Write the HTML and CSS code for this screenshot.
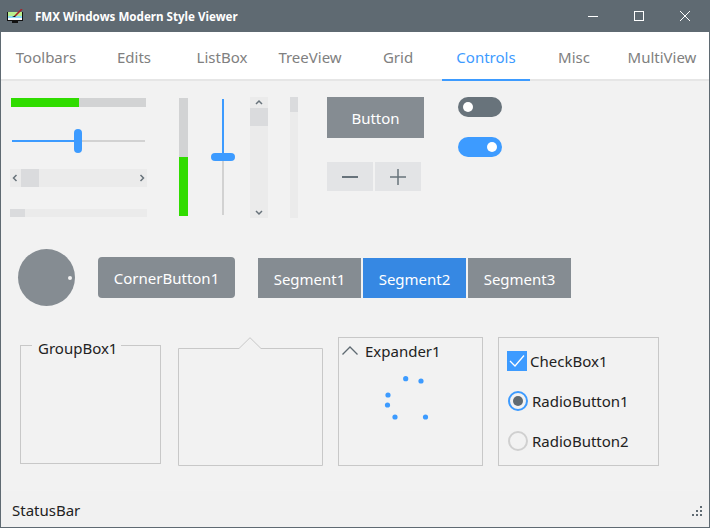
FILE: index.html
```html
<!DOCTYPE html>
<html lang="en">
<head>
    <meta charset="UTF-8">
    <title>FMX Windows Modern Style Viewer</title>
    <link rel="stylesheet" href="styles.css">
</head>
<body>
    <div class="window">
        <div class="titlebar">
            <svg class="app-icon" width="16" height="15" viewBox="0 0 16 15">
                <rect x="0" y="3" width="16" height="9" fill="#111"/>
                <rect x="1" y="3" width="14" height="4" fill="#b9ef8e"/>
                <rect x="1" y="7" width="14" height="4" fill="#8fdcf5"/>
                <rect x="1" y="9" width="14" height="2" fill="#fff"/>
                <rect x="5" y="12" width="6" height="2" fill="#111"/>
                <path d="M8 7 L15 0" stroke="#a5232a" stroke-width="1.6"/>
                <path d="M5 8 L8 6.5 L8.5 8 Z" fill="#111"/>
            </svg>
            <span class="title">FMX Windows Modern Style Viewer</span>
            <div class="win-buttons">
                <svg width="10" height="10" viewBox="0 0 10 10"><path d="M0 5.5H10" stroke="#fff"/></svg>
                <svg width="10" height="10" viewBox="0 0 10 10"><rect x="0.5" y="0.5" width="9" height="9" fill="none" stroke="#fff"/></svg>
                <svg width="10" height="10" viewBox="0 0 10 10"><path d="M0 0L10 10M10 0L0 10" stroke="#fff"/></svg>
            </div>
        </div>

        <div class="tabs">
            <div class="tab">Toolbars</div>
            <div class="tab">Edits</div>
            <div class="tab">ListBox</div>
            <div class="tab">TreeView</div>
            <div class="tab">Grid</div>
            <div class="tab active">Controls</div>
            <div class="tab">Misc</div>
            <div class="tab">MultiView</div>
        </div>

        <div class="content">
            <div class="row row-one">
                <div class="col-horizontal">
                    <div class="progress-h"><div class="progress-h-fill"></div></div>
                    <div class="slider-h">
                        <div class="slider-h-on"></div>
                        <div class="slider-h-thumb"></div>
                        <div class="slider-h-off"></div>
                    </div>
                    <div class="scroll-h">
                        <svg class="arrow" width="11" height="18" viewBox="0 0 11 18"><path d="M6.500 6L3.500 9L6.500 12" fill="none" stroke="#68737b" stroke-width="1.500"/></svg>
                        <div class="scroll-h-thumb"></div>
                        <svg class="arrow arrow-end" width="11" height="18" viewBox="0 0 11 18"><path d="M4.500 6L7.500 9L4.500 12" fill="none" stroke="#68737b" stroke-width="1.500"/></svg>
                    </div>
                    <div class="small-scroll-h"><div class="small-scroll-h-thumb"></div></div>
                </div>

                <div class="progress-v"><div class="progress-v-fill"></div></div>

                <div class="slider-v">
                    <div class="slider-v-on"></div>
                    <div class="slider-v-thumb"></div>
                    <div class="slider-v-off"></div>
                </div>

                <div class="scroll-v">
                    <svg class="arrow" width="18" height="11" viewBox="0 0 18 11"><path d="M6 7L9 4L12 7" fill="none" stroke="#68737b" stroke-width="1.500"/></svg>
                    <div class="scroll-v-thumb"></div>
                    <svg class="arrow arrow-end" width="18" height="11" viewBox="0 0 18 11"><path d="M6 4L9 7L12 4" fill="none" stroke="#68737b" stroke-width="1.500"/></svg>
                </div>

                <div class="small-scroll-v"><div class="small-scroll-v-thumb"></div></div>

                <div class="col-buttons">
                    <div class="button">Button</div>
                    <div class="spin">
                        <div class="spin-part"><svg width="16" height="16" viewBox="0 0 16 16"><path d="M0 8H16" stroke="#68737b" stroke-width="2"/></svg></div>
                        <div class="spin-part"><svg width="16" height="16" viewBox="0 0 16 16"><path d="M0 8H16M8 0V16" stroke="#68737b" stroke-width="1.500"/></svg></div>
                    </div>
                </div>

                <div class="col-switches">
                    <div class="switch"><div class="switch-knob"></div></div>
                    <div class="switch on"><div class="switch-knob"></div></div>
                </div>
            </div>

            <div class="row row-two">
                <div class="dial"><div class="dial-dot"></div></div>
                <div class="corner-button">CornerButton1</div>
                <div class="segments">
                    <div class="segment">Segment1</div>
                    <div class="segment active">Segment2</div>
                    <div class="segment">Segment3</div>
                </div>
            </div>

            <div class="row row-three">
                <div class="groupbox"><span class="legend">GroupBox1</span></div>

                <svg class="callout" width="145" height="129" viewBox="0 0 145 129">
                    <path d="M0.500 11.500H61L72 0.700L83 11.500H144.500V128.500H0.500Z" fill="none" stroke="#c8c8c8"/>
                </svg>

                <div class="expander">
                    <div class="expander-head">
                        <svg width="16" height="9" viewBox="0 0 16 9"><path d="M0.500 8.500L8 1L15.500 8.500" fill="none" stroke="#5f6a72" stroke-width="1.300"/></svg>
                        <span>Expander1</span>
                    </div>
                    <svg class="spinner" width="60" height="60" viewBox="0 0 60 60">
                        <circle cx="27.700" cy="6.700" r="2.600"/>
                        <circle cx="43" cy="9" r="2.600"/>
                        <circle cx="10" cy="23" r="2.600"/>
                        <circle cx="9.500" cy="33" r="2.600"/>
                        <circle cx="17" cy="45" r="2.600"/>
                        <circle cx="47.500" cy="45" r="2.600"/>
                    </svg>
                </div>

                <div class="choices">
                    <div class="choice choice-check">
                        <svg width="20" height="20" viewBox="0 0 20 20"><rect width="20" height="20" fill="#3d9bff"/><path d="M3 10L8 15L17 4.500" fill="none" stroke="#fff" stroke-width="1.300"/></svg>
                        <span>CheckBox1</span>
                    </div>
                    <div class="choice">
                        <div class="radio on"><div class="radio-dot"></div></div>
                        <span>RadioButton1</span>
                    </div>
                    <div class="choice">
                        <div class="radio"></div>
                        <span>RadioButton2</span>
                    </div>
                </div>
            </div>
        </div>

        <div class="statusbar">
            <span class="status-text">StatusBar</span>
            <div class="grip">
                <i></i><i></i><b></b>
                <i></i><b></b><b></b>
                <b></b><b></b><b></b>
            </div>
        </div>
    </div>
</body>
</html>
```

FILE: styles.css
```css
* {
    box-sizing: border-box;
}
html, body {
    margin: 0;
    padding: 0;
}
body {
    font-family: "Noto Sans", "Open Sans", sans-serif;
    font-size: 15px;
    color: #222;
}
.window {
    width: 710px;
    height: 528px;
    display: flex;
    flex-direction: column;
    background-color: #f2f2f2;
    border: 1px solid #5f6a72;
    border-top: none;
    overflow: hidden;
}

/* title bar */
.titlebar {
    height: 32px;
    margin: 0 -1px;
    flex: none;
    display: flex;
    align-items: center;
    background-color: #5f6a72;
    color: #fff;
}
.app-icon {
    margin-left: 7px;
}
.title {
    margin-left: 12px;
    font-size: 11.6px;
    font-weight: bold;
}
.win-buttons {
    margin-left: auto;
    margin-right: 20px;
    display: flex;
    gap: 36px;
}

/* tabs */
.tabs {
    height: 49px;
    flex: none;
    display: flex;
    padding-left: 1px;
    background-color: #fff;
    border-bottom: 2px solid #e6e6e6;
}
.tab {
    width: 88px;
    height: 49px;
    flex: none;
    text-align: center;
    line-height: 51px;
    color: #808080;
}
.tab.active {
    color: #3d9bff;
    border-bottom: 2px solid #3d9bff;
}

/* content */
.content {
    flex: 1;
    padding-left: 9px;
}
.row {
    display: flex;
}
.row-one {
    height: 121px;
    margin-top: 16px;
}
.col-horizontal {
    width: 137px;
    flex: none;
    padding-top: 1px;
}
.progress-h {
    height: 9px;
    margin: 0 1px;
    background-color: #d2d3d4;
}
.progress-h-fill {
    width: 68px;
    height: 9px;
    background-color: #30dc00;
}
.slider-h {
    height: 24px;
    margin: 22px 2px 0;
    display: flex;
    align-items: center;
}
.slider-h-on {
    width: 62px;
    height: 2px;
    background-color: #3d9bff;
}
.slider-h-thumb {
    width: 8px;
    height: 24px;
    flex: none;
    border-radius: 4px;
    background-color: #3d9bff;
}
.slider-h-off {
    flex: 1;
    height: 2px;
    background-color: #d2d2d2;
}
.scroll-h {
    height: 18px;
    margin-top: 16px;
    display: flex;
    background-color: #ebebeb;
}
.arrow {
    flex: none;
    display: block;
}
.arrow-end {
    margin-left: auto;
}
.scroll-h-thumb {
    width: 18px;
    background-color: #dadbdd;
}
.small-scroll-h {
    height: 8px;
    margin-top: 22px;
    background-color: #ebebeb;
}
.small-scroll-h-thumb {
    width: 15px;
    height: 8px;
    background-color: #dadbdd;
}
.progress-v {
    width: 9px;
    height: 118px;
    margin: 1px 0 0 32px;
    flex: none;
    background-color: #d2d3d4;
    display: flex;
    align-items: flex-end;
}
.progress-v-fill {
    width: 9px;
    height: 59px;
    background-color: #30dc00;
}
.slider-v {
    width: 24px;
    height: 116px;
    margin: 2px 0 0 23px;
    flex: none;
    display: flex;
    flex-direction: column;
    align-items: center;
}
.slider-v-on {
    width: 2px;
    height: 54px;
    background-color: #3d9bff;
}
.slider-v-thumb {
    width: 24px;
    height: 8px;
    flex: none;
    border-radius: 4px;
    background-color: #3d9bff;
}
.slider-v-off {
    width: 2px;
    flex: 1;
    background-color: #d2d2d2;
}
.scroll-v {
    width: 18px;
    height: 121px;
    margin-left: 15px;
    flex: none;
    display: flex;
    flex-direction: column;
    background-color: #ebebeb;
}
.scroll-v .arrow-end {
    margin-left: 0;
    margin-top: auto;
}
.scroll-v-thumb {
    height: 18px;
    background-color: #dadbdd;
}
.small-scroll-v {
    width: 8px;
    height: 121px;
    margin-left: 22px;
    flex: none;
    background-color: #ebebeb;
}
.small-scroll-v-thumb {
    width: 8px;
    height: 15px;
    background-color: #dadbdd;
}
.col-buttons {
    width: 97px;
    margin-left: 29px;
    flex: none;
}
.button {
    height: 41px;
    line-height: 42px;
    text-align: center;
    color: #fff;
    background-color: #858c92;
}
.spin {
    margin-top: 24px;
    display: flex;
    gap: 2px;
}
.spin-part {
    width: 46px;
    height: 29px;
    display: flex;
    align-items: center;
    justify-content: center;
    background-color: #e3e4e6;
}
.col-switches {
    margin-left: 34px;
    display: flex;
    flex-direction: column;
    gap: 20px;
}
.switch {
    width: 44px;
    height: 20px;
    padding: 5px;
    border-radius: 10px;
    background-color: #68737b;
}
.switch.on {
    display: flex;
    justify-content: flex-end;
    background-color: #3d9bff;
}
.switch-knob {
    width: 10px;
    height: 10px;
    border-radius: 50%;
    background-color: #fff;
}

/* second row */
.row-two {
    margin-top: 31px;
    height: 57px;
    align-items: flex-start;
}
.dial {
    width: 57px;
    height: 57px;
    margin-left: 8px;
    padding-right: 3px;
    flex: none;
    display: flex;
    align-items: center;
    justify-content: flex-end;
    border-radius: 50%;
    background-color: #858c92;
}
.dial-dot {
    width: 4px;
    height: 4px;
    border-radius: 50%;
    background-color: #f2f2f2;
}
.corner-button {
    width: 137px;
    height: 41px;
    margin: 8px 0 0 23px;
    line-height: 42px;
    text-align: center;
    color: #fff;
    border-radius: 4px;
    background-color: #858c92;
}
.segments {
    margin: 9px 0 0 23px;
    display: flex;
    gap: 2px;
}
.segment {
    width: 103px;
    height: 40px;
    line-height: 42px;
    text-align: center;
    color: #fff;
    background-color: #858c92;
}
.segment.active {
    background-color: #3688e3;
}

/* third row */
.row-three {
    margin-top: 31px;
    height: 129px;
    align-items: flex-start;
}
.groupbox {
    width: 141px;
    height: 119px;
    margin: 8px 0 0 10px;
    flex: none;
    border: 1px solid #c8c8c8;
}
.legend {
    display: inline-block;
    margin: -8px 0 0 11px;
    padding: 0 4px 0 6px;
    line-height: 20px;
    vertical-align: top;
    background: linear-gradient(#f2f2f2 50%, transparent 50%);
}
.callout {
    margin-left: 17px;
    flex: none;
}
.expander {
    width: 145px;
    height: 129px;
    margin-left: 15px;
    flex: none;
    border: 1px solid #c8c8c8;
}
.expander-head {
    height: 25px;
    padding-left: 3px;
    display: flex;
    align-items: center;
    gap: 7px;
}
.spinner {
    display: block;
    margin: 9px 0 0 39px;
    fill: #3d9bff;
}
.choices {
    width: 161px;
    height: 129px;
    margin-left: 15px;
    padding: 13px 0 0 8px;
    flex: none;
    display: flex;
    flex-direction: column;
    gap: 20px;
    border: 1px solid #c8c8c8;
}
.choice {
    height: 20px;
    display: flex;
    align-items: center;
    gap: 4px;
    padding-left: 1px;
}
.choice-check {
    padding-left: 0;
    gap: 3px;
}
.radio {
    width: 20px;
    height: 20px;
    flex: none;
    display: flex;
    align-items: center;
    justify-content: center;
    border: 2px solid #d0d0d0;
    border-radius: 50%;
}
.radio.on {
    border-color: #3d9bff;
}
.radio-dot {
    width: 10px;
    height: 10px;
    border-radius: 50%;
    background-color: #5f6a72;
}

/* status bar */
.statusbar {
    height: 36px;
    flex: none;
    padding: 0 7px 0 11px;
    display: flex;
    align-items: center;
    justify-content: space-between;
    background-color: #f1f1f1;
}
.status-text {
    padding-top: 1px;
}
.grip {
    align-self: flex-end;
    margin-bottom: 11px;
    display: grid;
    grid-template-columns: repeat(3, 2px);
    grid-auto-rows: 2px;
    gap: 2px;
}
.grip b {
    background-color: #5f6a72;
}
```
